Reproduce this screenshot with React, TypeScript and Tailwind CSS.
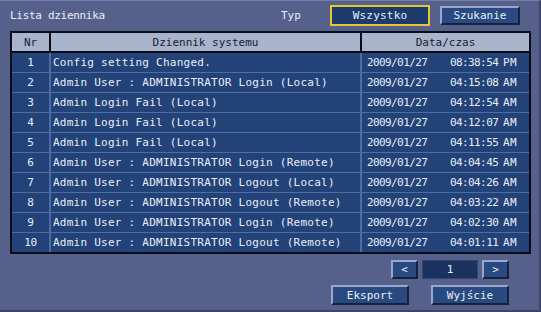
import React from "react";

const rows: [string, string, string, string][] = [
  ["1", "Config setting Changed.", "08:38:54", "PM"],
  ["2", "Admin User : ADMINISTRATOR Login (Local)", "04:15:08", "AM"],
  ["3", "Admin Login Fail (Local)", "04:12:54", "AM"],
  ["4", "Admin Login Fail (Local)", "04:12:07", "AM"],
  ["5", "Admin Login Fail (Local)", "04:11:55", "AM"],
  ["6", "Admin User : ADMINISTRATOR Login (Remote)", "04:04:45", "AM"],
  ["7", "Admin User : ADMINISTRATOR Logout (Local)", "04:04:26", "AM"],
  ["8", "Admin User : ADMINISTRATOR Logout (Remote)", "04:03:22", "AM"],
  ["9", "Admin User : ADMINISTRATOR Login (Remote)", "04:02:30", "AM"],
  ["10", "Admin User : ADMINISTRATOR Logout (Remote)", "04:01:11", "AM"],
];

const bevel =
  "flex items-center justify-center bg-[#284a80] text-[#e8eef8] border-t-2 border-l-2 border-t-[#9aa7cc] border-l-[#9aa7cc] border-b-2 border-r-2 border-b-[#16213d] border-r-[#16213d]";

export default function App() {
  return (
    <div
      className="w-[541px] h-[312px] bg-[#55608b] border-t border-t-[#737ea8] border-r-2 border-r-[#3c4469] border-b-2 border-b-[#3c4469] text-[11px] leading-none text-[#e8eef8] flex flex-col"
      style={{ fontFamily: '"DejaVu Sans Mono", monospace' }}
    >
      {/* top bar */}
      <div className="flex items-center pl-[10px] pt-[4px] h-[25px]">
        <div className="w-[271px] tracking-[-0.3px]">Lista dziennika</div>
        <div className="w-[49px]">Typ</div>
        <div className="w-[100px] h-[21px] flex items-center justify-center bg-[#1d3a6c] border-2 border-[#e6c62e] tracking-[0.2px]">
          Wszystko
        </div>
        <div className={`ml-[10px] w-[80px] h-[19px] ${bevel}`}>Szukanie</div>
      </div>

      {/* table */}
      <div className="ml-[10px] mt-[5px] w-[521px] border-2 border-[#0b0c18] bg-[#4f6da2] flex flex-col">
        <div className="flex h-[20px] bg-[#a8b3cc] text-[#1a1e2e] border-b-2 border-b-[#0b0c18]">
          <div className="w-[39px] border-r-2 border-r-[#0b0c18] flex items-center justify-center">Nr</div>
          <div className="w-[311px] border-r-2 border-r-[#0b0c18] flex items-center justify-center">
            Dziennik systemu
          </div>
          <div className="flex-1 flex items-center justify-center">Data/czas</div>
        </div>
        <div className="flex flex-col gap-[1px]">
          {rows.map(([n, msg, time, ap]) => (
            <div key={n} className="flex h-[19px] bg-[#234277]">
              <div className="w-[39px] border-r-2 border-r-[#4f6da2] flex items-center justify-center tracking-[-0.3px]">
                {n}
              </div>
              <div className="w-[311px] border-r-2 border-r-[#4f6da2] flex items-center pl-[2px] whitespace-pre tracking-[0.25px]">
                {msg}
              </div>
              <div className="flex-1 flex items-center pl-[5px] whitespace-pre tracking-[-0.6px]">
                <span className="w-[83px]">2009/01/27</span>
                <span className="w-[53px]">{time}</span>
                <span className="tracking-[0.5px]">{ap}</span>
              </div>
            </div>
          ))}
        </div>
      </div>

      {/* pagination */}
      <div className="flex justify-end pr-[30px] mt-[6px] gap-[4px]">
        <div className={`w-[27px] h-[19px] ${bevel}`}>&lt;</div>
        <div className="w-[56px] h-[19px] flex items-center justify-center bg-[#1b3260] border border-[#34466e]">1</div>
        <div className={`w-[27px] h-[19px] ${bevel}`}>&gt;</div>
      </div>

      {/* bottom buttons */}
      <div className="flex justify-end pr-[30px] mt-[6px] gap-[22px]">
        <div className={`w-[78px] h-[20px] ${bevel}`}>Eksport</div>
        <div className={`w-[78px] h-[20px] ${bevel}`}>Wyjście</div>
      </div>
    </div>
  );
}
